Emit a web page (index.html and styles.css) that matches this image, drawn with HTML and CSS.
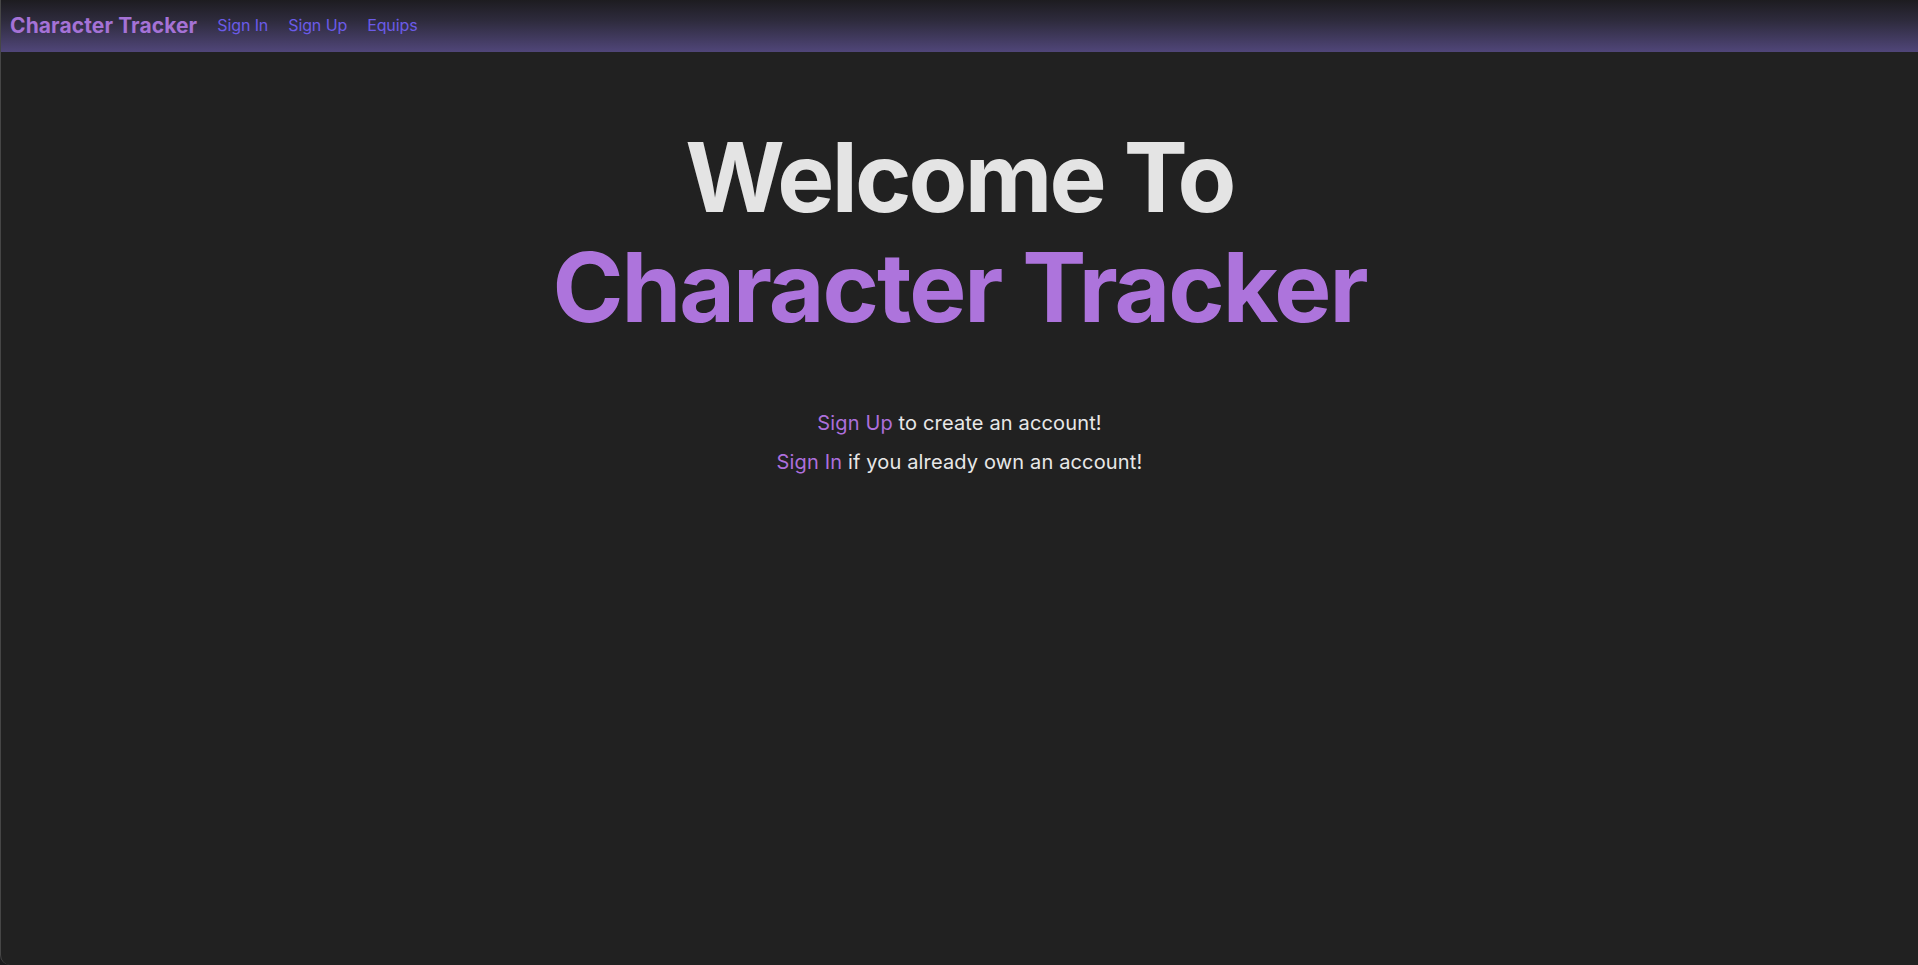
FILE: index.html
```html
<!DOCTYPE html>
<html lang="en">
<head>
<meta charset="utf-8">
<title>Character Tracker</title>
<link rel="stylesheet" href="styles.css">
</head>
<body>
<div class="app">
  <nav class="navbar">
    <a class="brand" href="#">Character Tracker</a>
    <a class="nav-link" href="#">Sign In</a>
    <a class="nav-link" href="#">Sign Up</a>
    <a class="nav-link" href="#">Equips</a>
  </nav>
  <main class="home">
    <h1 class="title">
      <span class="title-line">Welcome To</span>
      <span class="title-line accent">Character Tracker</span>
    </h1>
    <div class="intro">
      <p class="intro-line"><a class="inline-link" href="#">Sign Up</a> to create an account!</p>
      <p class="intro-line"><a class="inline-link" href="#">Sign In</a> if you already own an account!</p>
    </div>
  </main>
</div>
</body>
</html>
```

FILE: styles.css
```css
* { box-sizing: border-box; }
html, body {
  margin: 0;
  padding: 0;
  height: 100%;
  background: #1b1b1d;
}
body {
  font-family: Inter, "Noto Sans", "Liberation Sans", sans-serif;
  color: #e6e6e6;
}
.app {
  height: 100%;
  background: #212121;
  border-left: 1px solid #464646;
  border-bottom-left-radius: 10px;
  overflow: hidden;
  display: flex;
  flex-direction: column;
}
.navbar {
  height: 52px;
  display: flex;
  align-items: center;
  padding: 0 0 2px 9px;
  background: linear-gradient(to bottom, #1d1c20 0%, #2e2b3d 40%, #504679 100%);
}
.navbar a { text-decoration: none; }
.brand {
  font-size: 21px;
  font-weight: 700;
  color: #a572d6;
  margin-right: 20px;
  letter-spacing: 0.1px;
}
.nav-link {
  font-size: 16px;
  color: #6b5be8;
  margin-right: 20px;
  letter-spacing: -0.1px;
}
.home {
  display: flex;
  flex-direction: column;
  align-items: center;
  padding-top: 70px;
}
.title {
  margin: 0;
  font-size: 96px;
  line-height: 110px;
  font-weight: 700;
  letter-spacing: -2.8px;
  text-align: center;
  display: flex;
  flex-direction: column;
  align-items: center;
}
.title-line { color: #e4e4e4; }
.title-line.accent { color: #ad74dc; letter-spacing: -2px; }
.intro {
  margin-top: 62px;
  text-align: center;
}
.intro-line {
  margin: 0;
  font-size: 20px;
  line-height: 39px;
  letter-spacing: 0.15px;
  color: #e8e8e8;
}
.inline-link {
  color: #ad6fdc;
  text-decoration: none;
}
```
